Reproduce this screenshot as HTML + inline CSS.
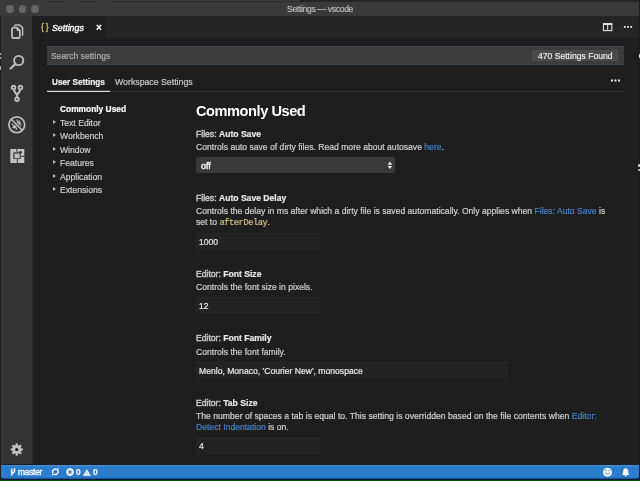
<!DOCTYPE html>
<html><head><meta charset="utf-8">
<style>
*{margin:0;padding:0;box-sizing:border-box}
html,body{width:640px;height:481px;overflow:hidden;background:#1e1e1e;font-family:"Liberation Sans",sans-serif;color:#d0d0d0}
.a{position:absolute}
.t{position:absolute;white-space:nowrap;font-size:8.6px;line-height:11px;will-change:transform;-webkit-text-stroke-width:0.2px}
.b{font-weight:bold}
#title{left:0;top:0;width:640px;height:16px;background:#3a3a3a}
.tl{top:5.1px;width:7.8px;height:7.8px;border-radius:50%;background:#666}
#act{left:0;top:16px;width:32px;height:449px;background:#333;border-right:1px solid #282828;width:33px}
#tabs{left:32px;top:16px;width:608px;height:22px;background:#252526}
#tab{left:32px;top:16px;width:73px;height:22px;background:#1e1e1e}
#status{left:1px;top:464px;width:638px;height:15px;background:linear-gradient(#0c2238 0,#0c2238 1px,#5c88b8 1px,#5c88b8 2px,#2e84d6 2px,#2b7ccc 4px,#2b7ccc 12px,#3183d8 13px,#1e5a9a 14px,#1e5a9a 15px);border-radius:0 0 3px 3px}
#bot{left:0;top:479px;width:640px;height:2px;background:#041838}
#grn{left:0;top:480px;width:640px;height:1px;background:repeating-linear-gradient(90deg,#006a00 0,#006a00 1px,#001800 1px,#001800 2px)}
#search{left:47px;top:46px;width:577px;height:19px;background:#3c3c3c;border-top:1px solid #3e4b56;border-bottom:1px solid #3e4b56}
#badge{left:532px;top:50px;width:86px;height:11px;background:#4a4a4a}
.sep{height:1px;background:#333}
.cat{color:#c4c4c4;-webkit-text-stroke-width:0.5px}
.nm{color:#e8e8e8;font-weight:bold}
.lnk{color:#4a80c8}
.mono{font-family:"Liberation Mono",monospace;font-size:8.8px;letter-spacing:-0.48px;color:#d2bc8a}
.inp{background:#232323;border-top:1px solid #282828}
.sel{background:#3a3a3a;border-radius:2px}
.toc{color:#cdcdcd}
.arr{width:0;height:0;border-left:3.4px solid #bbb;border-top:2.6px solid transparent;border-bottom:2.6px solid transparent;margin-top:-0.5px}
</style></head>
<body>
<div class="a" id="title"></div>
<div class="a" style="left:48px;top:1px;width:16px;height:1px;background:#2c2c2c"></div>
<div class="a" style="left:80px;top:1px;width:16px;height:1px;background:#2c2c2c"></div>
<div class="a" style="left:112px;top:1px;width:190px;height:1px;background:#2e2e2e"></div>
<div class="a" style="left:300px;top:0;width:339px;height:2px;background:#242424"></div>
<div class="a tl" style="left:6.1px"></div>
<div class="a tl" style="left:18.6px"></div>
<div class="a tl" style="left:30.85px"></div>
<div class="t" style="left:287px;top:3.5px;font-size:8.6px;letter-spacing:-0.33px;color:#bdbdbd">Settings — vscode</div>
<div class="a" id="act"></div>
<div class="a" id="tabs"></div>
<div class="a" id="tab"></div>
<div class="t" style="left:40.5px;top:22px;color:#c9b37a;font-size:8.6px;letter-spacing:-0.3px;-webkit-text-stroke-width:0.4px">{ }</div>
<div class="t" style="left:52px;top:22.5px;font-style:italic;color:#fff;font-size:8.8px;-webkit-text-stroke-width:0.35px">Settings</div>
<div class="t" style="left:95.5px;top:21.5px;color:#fff;font-size:10px;-webkit-text-stroke-width:0.5px">×</div>

<div class="a" id="search"></div>
<div class="t" style="left:51px;top:51px;color:#b0b0b0">Search settings</div>
<div class="a" id="badge"></div>
<div class="t" style="left:538px;top:51px;color:#e8e8e8">470 Settings Found</div>

<div class="t b" style="left:52px;top:76.5px;color:#f0f0f0;font-size:8.2px">User Settings</div>
<div class="t" style="left:115px;top:76.5px;color:#c8c8c8;font-size:8.75px">Workspace Settings</div>
<div class="a sep" style="left:47px;top:91px;width:577px"></div>
<div class="a" style="left:47px;top:91px;width:63px;height:1px;background:#d8d8d8"></div><div class="a" style="left:47px;top:90px;width:63px;height:1px;background:#4a4a4a"></div>

<!-- TOC -->
<div class="t b" style="left:60px;top:104px;color:#fff;font-size:8.4px">Commonly Used</div>
<div class="a arr" style="left:53px;top:120px"></div>
<div class="t toc" style="left:60px;top:117.5px">Text Editor</div>
<div class="a arr" style="left:53px;top:133.5px"></div>
<div class="t toc" style="left:60px;top:131px">Workbench</div>
<div class="a arr" style="left:53px;top:147px"></div>
<div class="t toc" style="left:60px;top:144.5px">Window</div>
<div class="a arr" style="left:53px;top:160.5px"></div>
<div class="t toc" style="left:60px;top:158px">Features</div>
<div class="a arr" style="left:53px;top:174px"></div>
<div class="t toc" style="left:60px;top:171.5px">Application</div>
<div class="a arr" style="left:53px;top:187.5px"></div>
<div class="t toc" style="left:60px;top:185px">Extensions</div>


<!-- activity icons -->
<svg class="a" style="left:4px;top:18px" width="24" height="24" viewBox="0 0 24 24" fill="none" stroke="#bdbdbd">
<path d="M8 11.2Q8 9.6 9.6 9.6L13 9.6L15.8 12.4L15.8 18.4Q15.8 20 14.2 20L9.6 20Q8 20 8 18.4Z" stroke-width="1.8"/>
<path d="M13 9.6L13 12.6L15.8 12.6Z" fill="#bdbdbd" stroke-width="0.8"/>
<path d="M10.2 8.4Q10.6 6.9 12.2 6.9L15.6 6.9L18.6 9.9L18.6 17.8" stroke-width="1.5"/>
</svg>
<svg class="a" style="left:4px;top:50px" width="24" height="24" viewBox="0 0 24 24" fill="none" stroke="#bdbdbd">
<circle cx="14.7" cy="10.5" r="4.6" stroke-width="1.9"/>
<path d="M11.4 13.9L6.6 18.5" stroke-width="2.2" stroke-linecap="round"/>
</svg>
<svg class="a" style="left:4px;top:81px" width="24" height="24" viewBox="0 0 24 24" fill="none" stroke="#bdbdbd">
<circle cx="9.5" cy="6.5" r="1.8" stroke-width="1.9"/>
<circle cx="16.5" cy="6.5" r="1.8" stroke-width="1.9"/>
<circle cx="13" cy="18.3" r="1.8" stroke-width="1.9"/>
<path d="M9.8 8.4Q10.4 11.6 13 13.4Q15.6 11.6 16.2 8.4M13 13.2L13 16.4" stroke-width="2.3"/>
</svg>
<svg class="a" style="left:4px;top:112px" width="24" height="24" viewBox="0 0 24 24" fill="none" stroke="#bdbdbd">
<path d="M10.2 8.4L11 10M13 7.6L13.2 9.6M15.6 8.4L14.8 10.2M17.2 11L15.4 11.6M17.4 13.6L15.6 13.2M7.6 12.4L9.6 12.4M12.4 17.8L12.6 16M8.6 15.6L10 15" stroke-width="1.3"/>
<ellipse cx="14.2" cy="11.4" rx="2" ry="2" fill="#bdbdbd" stroke="none"/>
<ellipse cx="10.8" cy="14.6" rx="2.1" ry="1.9" fill="#bdbdbd" stroke="none"/>
<path d="M7.4 7.4L18.2 18.2" stroke-width="3.2" stroke="#333"/>
<circle cx="12.8" cy="12.8" r="7.9" stroke-width="1.7"/>
<path d="M7.2 7.2L18.4 18.4" stroke-width="1.6"/>
</svg>
<svg class="a" style="left:4px;top:144px" width="24" height="24" viewBox="0 0 24 24">
<rect x="6.3" y="5" width="14" height="14" fill="#c4c4c4"/>
<rect x="9.3" y="8.3" width="7.4" height="6.7" fill="#333"/>
<rect x="10.5" y="9.5" width="5.2" height="4.8" fill="#bdbdbd"/>
<rect x="12.8" y="15" width="1" height="4" fill="#333"/>
<rect x="16.7" y="11.8" width="3.6" height="1" fill="#333"/>
<rect x="12.5" y="5" width="1" height="3.3" fill="#333"/>
<circle cx="16.5" cy="8.2" r="1.3" fill="#333"/>
</svg>
<svg class="a" style="left:4px;top:438px" width="24" height="24" viewBox="0 0 24 24">
<g fill="#c0c0c0" transform="translate(12.75 11.5)">
<circle r="4.6"/>
<rect x="-1.1" y="-6.1" width="2.2" height="12.2"/>
<rect x="-1.1" y="-6.1" width="2.2" height="12.2" transform="rotate(45)"/>
<rect x="-1.1" y="-6.1" width="2.2" height="12.2" transform="rotate(90)"/>
<rect x="-1.1" y="-6.1" width="2.2" height="12.2" transform="rotate(135)"/>
</g>
<circle cx="12.75" cy="11.5" r="1.6" fill="#1a1a1a"/>
</svg>
<!-- left-edge marks -->
<div class="a" style="left:0;top:16px;width:1px;height:449px;background:#1c1c1c"></div>
<div class="a" style="left:0;top:53px;width:1px;height:2px;background:#aaa"></div>
<div class="a" style="left:0;top:57px;width:1px;height:2px;background:#aaa"></div>
<div class="a" style="left:0;top:66px;width:1px;height:4px;background:#aaa"></div>
<div class="a" style="left:639px;top:0;width:1px;height:465px;background:#1c1c1c"></div>
<div class="a" style="left:639px;top:54px;width:1px;height:4px;background:#ddd"></div>
<div class="a" style="left:638px;top:164px;width:2px;height:3px;background:#bbb"></div><div class="a" style="left:638px;top:169px;width:2px;height:2px;background:#aaa"></div>
<!-- editor actions -->
<svg class="a" style="left:600px;top:20px" width="40" height="16" viewBox="0 0 40 16">
<rect x="3.5" y="3.7" width="8.3" height="6.9" fill="none" stroke="#e0e0e0" stroke-width="1.1"/>
<rect x="3" y="3.2" width="9.3" height="1.8" fill="#e0e0e0"/>
<rect x="7.15" y="4" width="1" height="6.6" fill="#e0e0e0"/>
<rect x="23.9" y="6" width="1.8" height="1.8" fill="#e8e8e8"/>
<rect x="27.1" y="6" width="1.8" height="1.8" fill="#e8e8e8"/>
<rect x="30.3" y="6" width="1.8" height="1.8" fill="#e8e8e8"/>
</svg>
<svg class="a" style="left:608px;top:76px" width="16" height="10" viewBox="0 0 16 10">
<rect x="3" y="3.5" width="2" height="2" fill="#e8e8e8"/>
<rect x="6.5" y="3.5" width="2" height="2" fill="#e8e8e8"/>
<rect x="10" y="3.5" width="2" height="2" fill="#e8e8e8"/>
</svg>

<!-- content -->
<div class="t b" style="left:196px;top:103px;font-size:14.6px;line-height:17px;color:#fff;-webkit-text-stroke-width:0;letter-spacing:-0.45px">Commonly Used</div>

<div class="t" style="left:196px;top:129px"><span class="cat">Files: </span><span class="nm">Auto Save</span></div>
<div class="t" style="left:196px;top:142px">Controls auto save of dirty files. Read more about autosave <span class="lnk">here</span>.</div>
<div class="a sel" style="left:196px;top:157px;width:199px;height:16px"></div>
<div class="t" style="left:201px;top:161px;color:#f4f4f4;font-size:9px;-webkit-text-stroke-width:0.4px">off</div>
<!-- select arrows -->
<svg class="a" style="left:385px;top:159px" width="10" height="12" viewBox="0 0 10 12">
<path d="M2.7 5.8L4.9 2.6L7.1 5.8Z M2.7 7L4.9 10.1L7.1 7Z" fill="#eee"/>
</svg>


<div class="t" style="left:196px;top:193px"><span class="cat">Files: </span><span class="nm">Auto Save Delay</span></div>
<div class="t" style="left:196px;top:206px">Controls the delay in ms after which a dirty file is saved automatically. Only applies when <span class="lnk">Files: Auto Save</span> is</div>
<div class="t" style="left:196px;top:217px">set to <span class="mono">afterDelay</span>.</div>
<div class="a inp" style="left:196px;top:233px;width:124px;height:17px"></div>
<div class="t" style="left:199px;top:237px;color:#e8e8e8">1000</div>

<div class="t" style="left:196px;top:269px"><span class="cat">Editor: </span><span class="nm">Font Size</span></div>
<div class="t" style="left:196px;top:282px">Controls the font size in pixels.</div>
<div class="a inp" style="left:196px;top:297px;width:124px;height:16px"></div>
<div class="t" style="left:199px;top:301px;color:#e8e8e8">12</div>

<div class="t" style="left:196px;top:333px"><span class="cat">Editor: </span><span class="nm">Font Family</span></div>
<div class="t" style="left:196px;top:347px">Controls the font family.</div>
<div class="a inp" style="left:196px;top:362px;width:312px;height:16px"></div>
<div class="t" style="left:199px;top:365.5px;color:#e8e8e8">Menlo, Monaco, 'Courier New', monospace</div>

<div class="t" style="left:196px;top:398px"><span class="cat">Editor: </span><span class="nm">Tab Size</span></div>
<div class="t" style="left:196px;top:411px;font-size:8.65px">The number of spaces a tab is equal to. This setting is overridden based on the file contents when <span class="lnk">Editor:</span></div>
<div class="t" style="left:196px;top:422px"><span class="lnk">Detect Indentation</span> is on.</div>
<div class="a inp" style="left:196px;top:438px;width:124px;height:16px"></div>
<div class="t" style="left:199px;top:441px;color:#e8e8e8">4</div>


<div class="a" id="status"></div>
<svg class="a" style="left:0;top:464px" width="640" height="16" viewBox="0 0 640 16" fill="none">
<g stroke="#f2f2f2">
<path d="M11.7 4.6L11.7 11.4" stroke-width="1.6"/>
<path d="M14.5 4.2L14.5 6.6Q14.5 8.7 11.9 9.2" stroke-width="1.6"/>
<circle cx="55.3" cy="7.8" r="2.7" stroke-width="1.4" stroke-dasharray="7.6 0.9" transform="rotate(-40 55.3 7.8)"/>
</g>
<path d="M56.6 5.6L58.9 5.4L58.6 3.6Z M54 10L51.7 10.2L52 12Z" fill="#f2f2f2"/>
<circle cx="70" cy="8.1" r="3.8" fill="#f4f4f4"/>
<path d="M68.4 6.5L71.6 9.7M71.6 6.5L68.4 9.7" stroke="#2b7ccc" stroke-width="1.1"/>
<path d="M86.9 5.6L90.4 11.6L83.4 11.6Z" fill="#f4f4f4" stroke="#f4f4f4" stroke-width="0.6" stroke-linejoin="round"/>
<rect x="86.6" y="7.8" width="0.6" height="1.8" fill="#2b7ccc"/>
<rect x="86.6" y="10.2" width="0.6" height="0.6" fill="#2b7ccc"/>
<circle cx="607.5" cy="8.2" r="4.5" fill="#f4f4f4"/>
<circle cx="605.8" cy="6.4" r="0.6" fill="#2b7ccc"/>
<circle cx="609.2" cy="6.4" r="0.6" fill="#2b7ccc"/>
<path d="M604.9 8.6Q607.5 11.6 610.1 8.6" stroke="#2b7ccc" stroke-width="0.8"/>
<path d="M625.7 4.3Q628.3 4.3 628.3 8L628.8 10.5L629.8 11.1L621.6 11.1L622.6 10.5L623.1 8Q623.1 4.3 625.7 4.3Z" fill="#f4f4f4"/>
<circle cx="625.7" cy="11.5" r="1" fill="#f4f4f4"/>
</svg>
<div class="t" style="left:18px;top:467px;color:#f4f4f4;font-size:8.4px;letter-spacing:-0.25px;-webkit-text-stroke-width:0.4px">master</div>
<div class="t b" style="left:76px;top:467px;color:#f4f4f4;font-size:8.4px">0</div>
<div class="t b" style="left:93px;top:467px;color:#f4f4f4;font-size:8.4px">0</div>

<div class="a" id="bot"></div>
<div class="a" id="grn"></div>
</body></html>
